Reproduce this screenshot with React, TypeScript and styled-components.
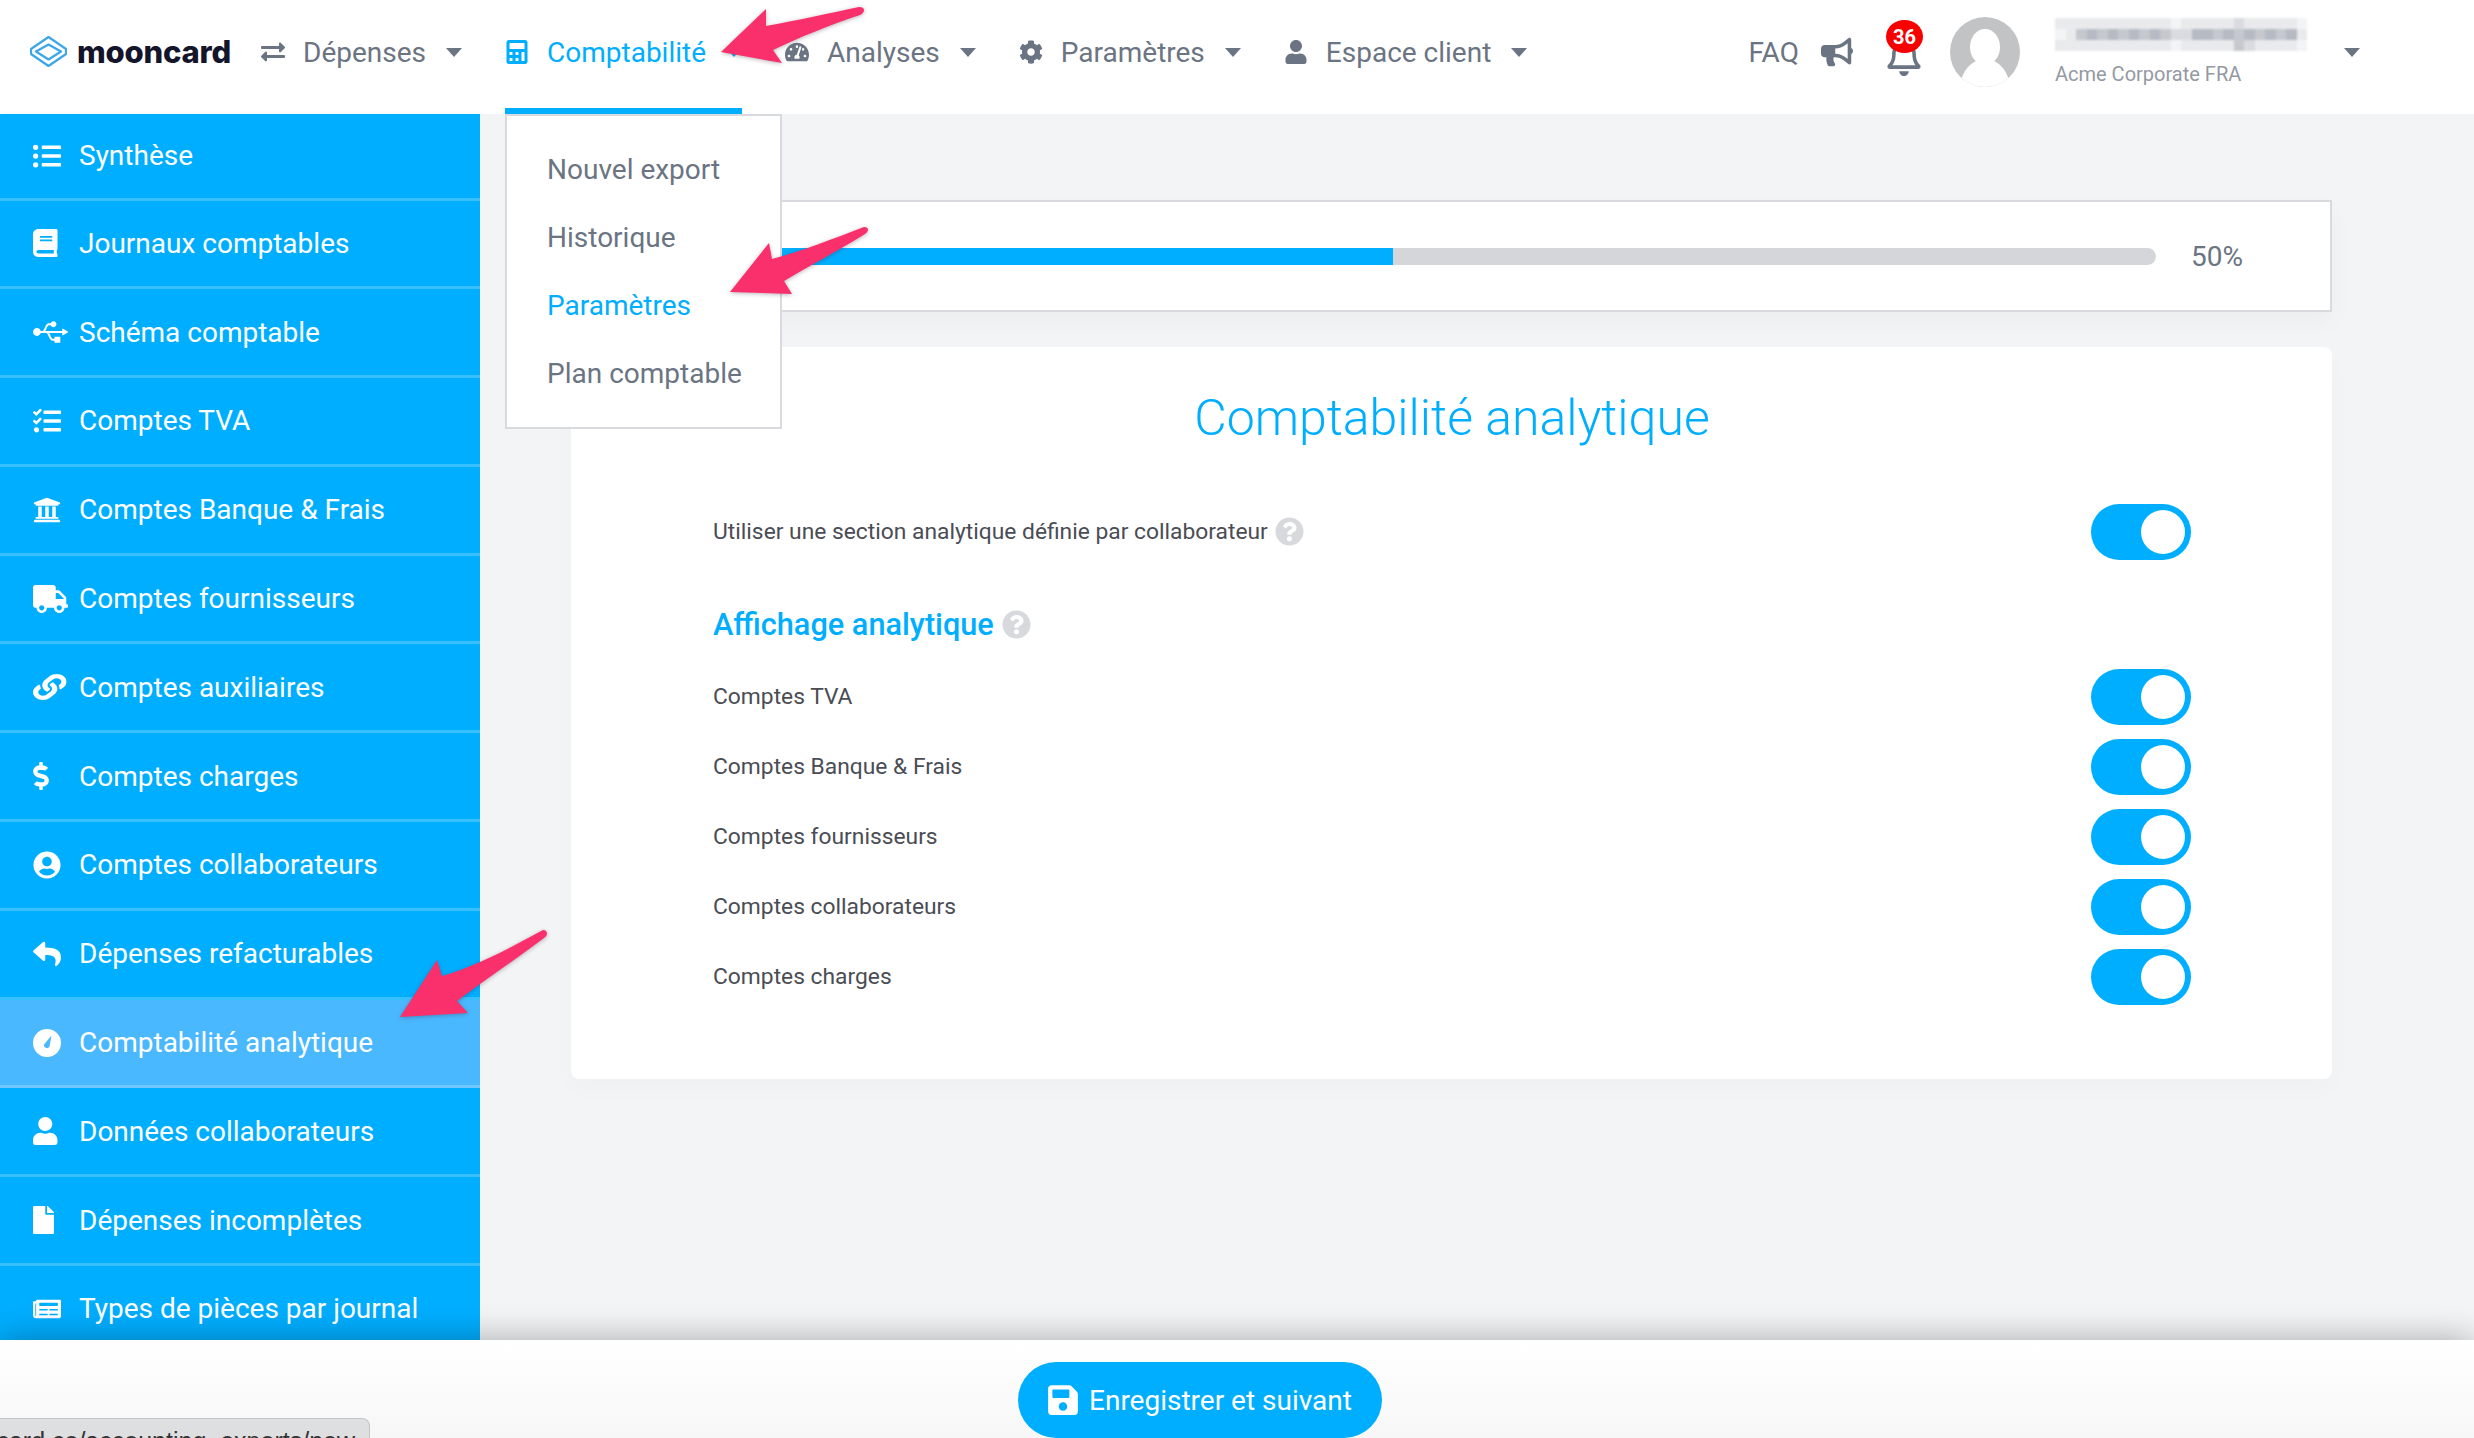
import styled, { createGlobalStyle } from "styled-components";
import {
  FaBook, FaBullhorn, FaCalculator, FaCog, FaDollarSign, FaExchangeAlt, FaFile, FaLink, FaListUl,
  FaNewspaper, FaQuestionCircle, FaRegBell, FaReply, FaSave, FaTachometerAlt, FaTasks, FaTruck,
  FaUniversity, FaUsb, FaUser, FaUserCircle,
} from "react-icons/fa";

const BLUE = "#00aeff";
const GREY = "#6b7482";

const GlobalStyle = createGlobalStyle`
  html, body { margin: 0; padding: 0; height: 100%; overflow: hidden; }
  body { font-family: Roboto, "Liberation Sans", sans-serif; background: #fff; }
  * { box-sizing: border-box; }
`;

const Page = styled.div`
  position: relative;
  width: 100%;
  height: 100vh;
  display: flex;
  flex-direction: column;
  overflow: hidden;
`;

const Header = styled.header`
  flex: 0 0 114px;
  display: flex;
  align-items: center;
  padding: 0 114px 0 30px;
  background: #fff;
  font-size: 28px;
  color: ${GREY};
`;

const Logo = styled.div`
  width: 231px;
  display: flex;
  align-items: center;
  gap: 10px;
  height: 114px;
  margin-top: -12px;
`;

const LogoText = styled.span`
  font-family: Inter, sans-serif;
  font-weight: 800;
  font-size: 31px;
  letter-spacing: -0.2px;
  color: #14142b;
`;

const Nav = styled.nav`
  display: flex;
  gap: 43px;
`;

const NavItem = styled.div<{ $active?: boolean }>`
  position: relative;
  height: 114px;
  padding-bottom: 10px;
  display: flex;
  align-items: center;
  color: ${(p) => (p.$active ? BLUE : GREY)};
`;

const NavIcon = styled.span`
  width: 42px;
  display: flex;
  align-items: center;
  font-size: 24px;
`;

const Caret = styled.span`
  width: 0;
  height: 0;
  margin-left: 20px;
  border-left: 8px solid transparent;
  border-right: 8px solid transparent;
  border-top: 9px solid currentColor;
`;

const Underline = styled.span`
  position: absolute;
  left: 0;
  right: 0;
  bottom: 0;
  height: 6px;
  background: ${BLUE};
`;

const Dropdown = styled.div`
  position: absolute;
  z-index: 5;
  left: 0;
  top: 114px;
  width: 277px;
  height: 315px;
  padding: 19px 0 0 40px;
  background: #fff;
  border: 2px solid #d9dadd;
  display: flex;
  flex-direction: column;
`;

const DropdownItem = styled.div<{ $active?: boolean }>`
  height: 68px;
  display: flex;
  align-items: center;
  font-size: 28px;
  color: ${(p) => (p.$active ? BLUE : GREY)};
`;

const UserArea = styled.div`
  margin-left: auto;
  height: 114px;
  padding-bottom: 10px;
  display: flex;
  align-items: center;
  color: ${GREY};
`;

const Faq = styled.span`
  margin-right: 22px;
`;

const HornIcon = styled(FaBullhorn)`
  font-size: 32px;
  margin-right: 32px;
`;

const BellWrap = styled.div`
  position: relative;
  width: 39px;
  height: 56px;
  margin: 0 26px 8px 0;
  display: flex;
  align-items: flex-end;
  font-size: 38px;
`;

const Badge = styled.span`
  position: absolute;
  top: 0;
  left: 1px;
  width: 37px;
  height: 33px;
  border-radius: 50%;
  background: #f60000;
  color: #fff;
  font-size: 20px;
  font-weight: 700;
  display: flex;
  align-items: center;
  justify-content: center;
`;

const Avatar = styled.svg`
  width: 70px;
  height: 70px;
  margin-right: 35px;
`;

const UserInfo = styled.div`
  width: 252px;
  margin-right: 17px;
  display: flex;
  flex-direction: column;
`;

const Mosaic = styled.div`
  display: flex;
  flex-direction: column;
  filter: blur(1px);
`;

const MosaicRow = styled.div`
  display: flex;
`;

const MosaicCell = styled.span<{ $shade: string }>`
  width: 10.5px;
  height: 11px;
  background: ${(p) => p.$shade};
`;

const Company = styled.div`
  margin-top: 11px;
  font-size: 20px;
  line-height: 24px;
  color: #9499a3;
`;

const Body = styled.div`
  flex: 1;
  min-height: 0;
  display: flex;
`;

const Sidebar = styled.aside`
  flex: 0 0 480px;
  overflow: hidden;
  background: ${BLUE};
  box-shadow: 2px 0 6px rgba(0, 0, 0, 0.06);
`;

const SideItem = styled.div<{ $active?: boolean }>`
  height: 88.8px;
  padding-left: 33px;
  display: flex;
  align-items: center;
  color: #fff;
  font-size: 28px;
  background: ${(p) => (p.$active ? "#4ab8ff" : "transparent")};
  border-bottom: 3px solid rgba(255, 255, 255, 0.22);

  &:first-child {
    height: 86.5px;
  }
`;

const SideIcon = styled.span<{ $width?: number }>`
  width: 46px;
  flex: none;
  display: flex;
  align-items: center;
  font-size: 28px;

  svg {
    width: ${(p) => p.$width ?? 28}px;
    height: 28px;
  }
`;

// the link in the reference is flatter and wider than the package glyph
const WideLink = styled(FaLink)`
  transform-origin: left center;
  transform: scale(1.2, 0.92);
`;

const Content = styled.main`
  flex: 1;
  min-width: 0;
  padding: 86px 142px 0 91px;
  background: #f3f4f6;
  display: flex;
  flex-direction: column;
  gap: 35px;
`;

const ProgressCard = styled.section`
  height: 112px;
  padding: 0 87px 0 56px;
  display: flex;
  align-items: center;
  gap: 35px;
  background: #fff;
  border: 2px solid #d9dadd;
  box-shadow: 0 10px 24px rgba(0, 0, 0, 0.03);
`;

const Track = styled.div`
  flex: 1;
  height: 17px;
  border-radius: 9px;
  overflow: hidden;
  background: #d5d6da;
`;

const Fill = styled.div<{ $value: number }>`
  width: ${(p) => p.$value}%;
  height: 100%;
  background: ${BLUE};
`;

const Percent = styled.span`
  font-size: 28px;
  color: ${GREY};
`;

const FormCard = styled.section`
  height: 732px;
  padding: 32px 141px 0 142px;
  border-radius: 8px;
  background: #fff;
  box-shadow: 0 10px 30px rgba(0, 0, 0, 0.02);
  display: flex;
  flex-direction: column;
`;

const Title = styled.h1`
  margin: 0 0 47px;
  font-size: 50px;
  line-height: 78px;
  font-weight: 300;
  text-align: center;
  color: ${BLUE};
`;

const Row = styled.div`
  height: 56px;
  display: flex;
  align-items: center;
  justify-content: space-between;

  & + & {
    margin-top: 14px;
  }
`;

const Label = styled.span`
  display: flex;
  align-items: center;
  gap: 7px;
  font-size: 22.8px;
  color: #4a4d55;
  margin-top: -2px;
`;

const Section = styled.h2`
  margin: 36px 0 17px;
  height: 56px;
  display: flex;
  align-items: center;
  gap: 8px;
  font-size: 30.7px;
  font-weight: 500;
  color: ${BLUE};
`;

const Help = styled(FaQuestionCircle)`
  font-size: 29px;
  color: #d7d9dd;
`;

const Toggle = styled.span`
  width: 100px;
  height: 56px;
  padding: 6px;
  border-radius: 28px;
  background: ${BLUE};
  display: flex;
  justify-content: flex-end;
`;

const Knob = styled.span`
  width: 44px;
  height: 44px;
  border-radius: 50%;
  background: #fff;
`;

const Footer = styled.footer`
  position: relative;
  z-index: 2;
  flex: 0 0 98px;
  padding: 22px 0 0 1018px;
  background: linear-gradient(#fff, #f7f7f7);
  box-shadow: 0 0 34px rgba(0, 0, 0, 0.32);
`;

const SaveButton = styled.button`
  width: 364px;
  height: 76px;
  padding: 0 0 0 28px;
  border: none;
  border-radius: 38px;
  background: ${BLUE};
  color: #fff;
  font-family: inherit;
  font-size: 28px;
  display: flex;
  align-items: center;
  gap: 9px;
`;

const StatusBar = styled.div`
  position: absolute;
  left: 0;
  bottom: 0;
  width: 370px;
  height: 20px;
  padding: 8px 14px 0 0;
  overflow: hidden;
  display: flex;
  justify-content: flex-end;
  white-space: nowrap;
  font-family: "Liberation Sans", sans-serif;
  font-size: 25px;
  line-height: 28px;
  color: #333;
  background: #dedfe1;
  border: 1px solid #c4c5c8;
  border-left: none;
  border-bottom: none;
  border-top-right-radius: 8px;
`;

const Arrows = styled.svg`
  position: absolute;
  z-index: 10;
  inset: 0;
  width: 100%;
  height: 100%;
  pointer-events: none;
  filter: drop-shadow(0 1px 2px rgba(60, 40, 60, 0.35));
`;

const menu = [
  { label: "Dépenses", icon: <FaExchangeAlt /> },
  { label: "Comptabilité", icon: <FaCalculator />, active: true },
  { label: "Analyses", icon: <FaTachometerAlt /> },
  { label: "Paramètres", icon: <FaCog /> },
  { label: "Espace client", icon: <FaUser /> },
];

const exportMenu = ["Nouvel export", "Historique", "Paramètres", "Plan comptable"];

const GaugeCircle = () => (
  <svg viewBox="0 0 28 28">
    <path
      fill="currentColor"
      fillRule="evenodd"
      d="M14 0a14 14 0 1 0 0 28a14 14 0 0 0 0-28zM18.5 6.5L16.5 17.5a3 3 0 0 1-5.6-1.7z"
    />
  </svg>
);

const sideItems = [
  { label: "Synthèse", icon: <FaListUl /> },
  { label: "Journaux comptables", icon: <FaBook />, width: 24.5 },
  { label: "Schéma comptable", icon: <FaUsb />, width: 35 },
  { label: "Comptes TVA", icon: <FaTasks /> },
  { label: "Comptes Banque & Frais", icon: <FaUniversity /> },
  { label: "Comptes fournisseurs", icon: <FaTruck />, width: 35 },
  { label: "Comptes auxiliaires", icon: <WideLink /> },
  { label: "Comptes charges", icon: <FaDollarSign />, width: 16 },
  { label: "Comptes collaborateurs", icon: <FaUserCircle /> },
  { label: "Dépenses refacturables", icon: <FaReply /> },
  { label: "Comptabilité analytique", icon: <GaugeCircle />, active: true },
  { label: "Données collaborateurs", icon: <FaUser />, width: 24.5 },
  { label: "Dépenses incomplètes", icon: <FaFile />, width: 21 },
  { label: "Types de pièces par journal", icon: <FaNewspaper /> },
];

const analyticRows = ["Comptes TVA", "Comptes Banque & Frais", "Comptes fournisseurs", "Comptes collaborateurs", "Comptes charges"];

// pixelated user name
const mosaic = [
  "222222222221222223222221",
  "124545454543355454545452",
  "222222222221222224322221",
];
const shades = ["#ffffff", "#f3f4f6", "#e9eaec", "#d9dbe0", "#c5c8ce", "#b6bac3"];

const App = () => (
  <Page>
    <GlobalStyle />
    <Header>
      <Logo>
        <svg width="37" height="31" viewBox="0 0 37 31" fill="none" stroke="#3ba6ea" strokeWidth="2.2" strokeLinejoin="round">
          <path d="M18.5 1L36 13V18L18.5 30L1 18V13Z" />
          <path d="M18.5 8.5L31 15.5L18.5 23.5L6 15.5Z" />
        </svg>
        <LogoText>mooncard</LogoText>
      </Logo>
      <Nav>
        {menu.map((item) => (
          <NavItem key={item.label} $active={item.active}>
            <NavIcon>{item.icon}</NavIcon>
            {item.label}
            <Caret />
            {item.active && <Underline />}
            {item.active && (
              <Dropdown>
                {exportMenu.map((entry) => (
                  <DropdownItem key={entry} $active={entry === "Paramètres"}>{entry}</DropdownItem>
                ))}
              </Dropdown>
            )}
          </NavItem>
        ))}
      </Nav>
      <UserArea>
        <Faq>FAQ</Faq>
        <HornIcon />
        <BellWrap>
          <FaRegBell />
          <Badge>36</Badge>
        </BellWrap>
        <Avatar viewBox="0 0 70 70">
          <defs>
            <clipPath id="avatar-clip"><circle cx="35" cy="35" r="35" /></clipPath>
          </defs>
          <g clipPath="url(#avatar-clip)">
            <rect width="70" height="70" fill="#c2c3c4" />
            <ellipse cx="35" cy="30" rx="15" ry="18" fill="#fff" />
            <ellipse cx="35" cy="72" rx="25" ry="30" fill="#fff" />
          </g>
        </Avatar>
        <UserInfo>
          <Mosaic>
            {mosaic.map((row, y) => (
              <MosaicRow key={y}>
                {row.split("").map((c, x) => (
                  <MosaicCell key={x} $shade={shades[Number(c)]} />
                ))}
              </MosaicRow>
            ))}
          </Mosaic>
          <Company>Acme Corporate FRA</Company>
        </UserInfo>
        <Caret />
      </UserArea>
    </Header>
    <Body>
      <Sidebar>
        {sideItems.map((item) => (
          <SideItem key={item.label} $active={item.active}>
            <SideIcon $width={item.width}>{item.icon}</SideIcon>
            {item.label}
          </SideItem>
        ))}
      </Sidebar>
      <Content>
        <ProgressCard>
          <Track><Fill $value={50} /></Track>
          <Percent>50%</Percent>
        </ProgressCard>
        <FormCard>
          <Title>Comptabilité analytique</Title>
          <Row>
            <Label>Utiliser une section analytique définie par collaborateur <Help /></Label>
            <Toggle><Knob /></Toggle>
          </Row>
          <Section>Affichage analytique <Help /></Section>
          {analyticRows.map((label) => (
            <Row key={label}>
              <Label>{label}</Label>
              <Toggle><Knob /></Toggle>
            </Row>
          ))}
        </FormCard>
      </Content>
    </Body>
    <Footer>
      <SaveButton><FaSave size={34} />Enregistrer et suivant</SaveButton>
      <StatusBar>mooncard.co/accounting_exports/new</StatusBar>
    </Footer>
    <Arrows viewBox="0 0 2474 1438" fill="#f9306c">
      <path d="M721 52L766 9V26C800 20 830 13 859 7Q864 7 864 10Q864 13 860 15C830 25 800 37 773 50L782 63Z" />
      <path d="M730 292L769 243L772 259C800 252 835 238 864 227Q868 227 868 230Q868 232 865 234C840 250 810 265 784 281L792 294Z" />
      <path d="M400 1017L437 960L442 976C480 965 515 945 543 930Q547 930 547 934Q547 936 544 938C515 960 485 980 457 1001L468 1013Z" />
    </Arrows>
  </Page>
);

export default App;
